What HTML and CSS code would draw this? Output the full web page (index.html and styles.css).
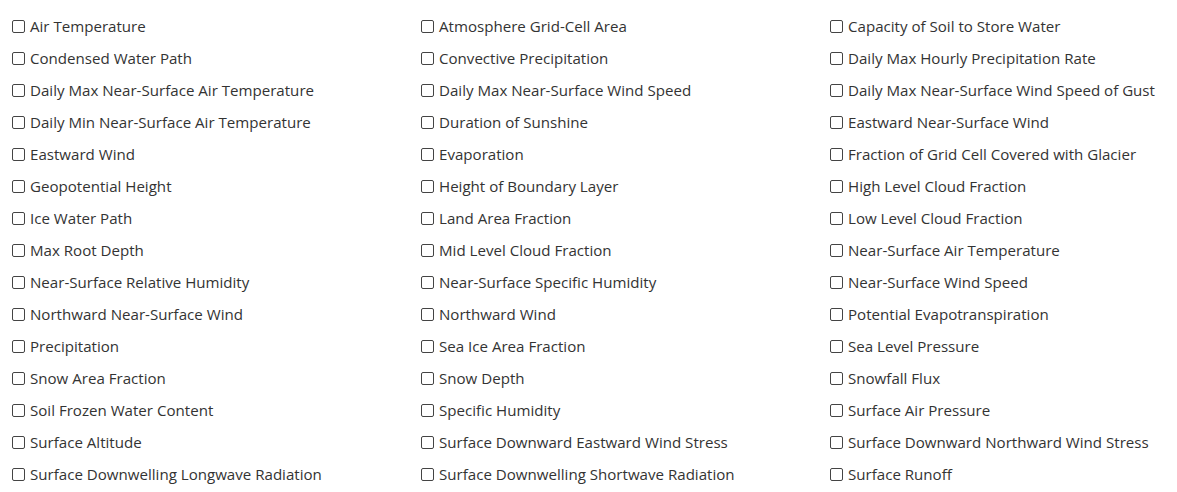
FILE: index.html
```html
<!DOCTYPE html>
<html>
<head>
<meta charset="utf-8">
<link rel="stylesheet" href="styles.css">
</head>
<body>
<div class="grid">
<label class="item"><input type="checkbox"> Air Temperature</label>
<label class="item"><input type="checkbox"> Atmosphere Grid-Cell Area</label>
<label class="item"><input type="checkbox"> Capacity of Soil to Store Water</label>
<label class="item"><input type="checkbox"> Condensed Water Path</label>
<label class="item"><input type="checkbox"> Convective Precipitation</label>
<label class="item"><input type="checkbox"> Daily Max Hourly Precipitation Rate</label>
<label class="item"><input type="checkbox"> Daily Max Near-Surface Air Temperature</label>
<label class="item"><input type="checkbox"> Daily Max Near-Surface Wind Speed</label>
<label class="item"><input type="checkbox"> Daily Max Near-Surface Wind Speed of Gust</label>
<label class="item"><input type="checkbox"> Daily Min Near-Surface Air Temperature</label>
<label class="item"><input type="checkbox"> Duration of Sunshine</label>
<label class="item"><input type="checkbox"> Eastward Near-Surface Wind</label>
<label class="item"><input type="checkbox"> Eastward Wind</label>
<label class="item"><input type="checkbox"> Evaporation</label>
<label class="item"><input type="checkbox"> Fraction of Grid Cell Covered with Glacier</label>
<label class="item"><input type="checkbox"> Geopotential Height</label>
<label class="item"><input type="checkbox"> Height of Boundary Layer</label>
<label class="item"><input type="checkbox"> High Level Cloud Fraction</label>
<label class="item"><input type="checkbox"> Ice Water Path</label>
<label class="item"><input type="checkbox"> Land Area Fraction</label>
<label class="item"><input type="checkbox"> Low Level Cloud Fraction</label>
<label class="item"><input type="checkbox"> Max Root Depth</label>
<label class="item"><input type="checkbox"> Mid Level Cloud Fraction</label>
<label class="item"><input type="checkbox"> Near-Surface Air Temperature</label>
<label class="item"><input type="checkbox"> Near-Surface Relative Humidity</label>
<label class="item"><input type="checkbox"> Near-Surface Specific Humidity</label>
<label class="item"><input type="checkbox"> Near-Surface Wind Speed</label>
<label class="item"><input type="checkbox"> Northward Near-Surface Wind</label>
<label class="item"><input type="checkbox"> Northward Wind</label>
<label class="item"><input type="checkbox"> Potential Evapotranspiration</label>
<label class="item"><input type="checkbox"> Precipitation</label>
<label class="item"><input type="checkbox"> Sea Ice Area Fraction</label>
<label class="item"><input type="checkbox"> Sea Level Pressure</label>
<label class="item"><input type="checkbox"> Snow Area Fraction</label>
<label class="item"><input type="checkbox"> Snow Depth</label>
<label class="item"><input type="checkbox"> Snowfall Flux</label>
<label class="item"><input type="checkbox"> Soil Frozen Water Content</label>
<label class="item"><input type="checkbox"> Specific Humidity</label>
<label class="item"><input type="checkbox"> Surface Air Pressure</label>
<label class="item"><input type="checkbox"> Surface Altitude</label>
<label class="item"><input type="checkbox"> Surface Downward Eastward Wind Stress</label>
<label class="item"><input type="checkbox"> Surface Downward Northward Wind Stress</label>
<label class="item"><input type="checkbox"> Surface Downwelling Longwave Radiation</label>
<label class="item"><input type="checkbox"> Surface Downwelling Shortwave Radiation</label>
<label class="item"><input type="checkbox"> Surface Runoff</label>
</div>
</body>
</html>
```
FILE: styles.css
```css
body {
  margin: 8px;
  font-family: "Open Sans", "Noto Sans", sans-serif;
  font-size: 15.1px;
  color: #333;
  background: #fff;
}
.grid {
  display: grid;
  grid-template-columns: repeat(3, 409px);
  grid-auto-rows: 32px;
  padding-top: 2px;
}
.item {
  display: flex;
  align-items: center;
  white-space: nowrap;
}
.item input {
  appearance: none;
  -webkit-appearance: none;
  width: 13px;
  height: 13px;
  margin: 0 5px 0 4px;
  border: 1px solid #444;
  border-radius: 2px;
  background: #fff;
  box-sizing: border-box;
  flex: none;
}
```
